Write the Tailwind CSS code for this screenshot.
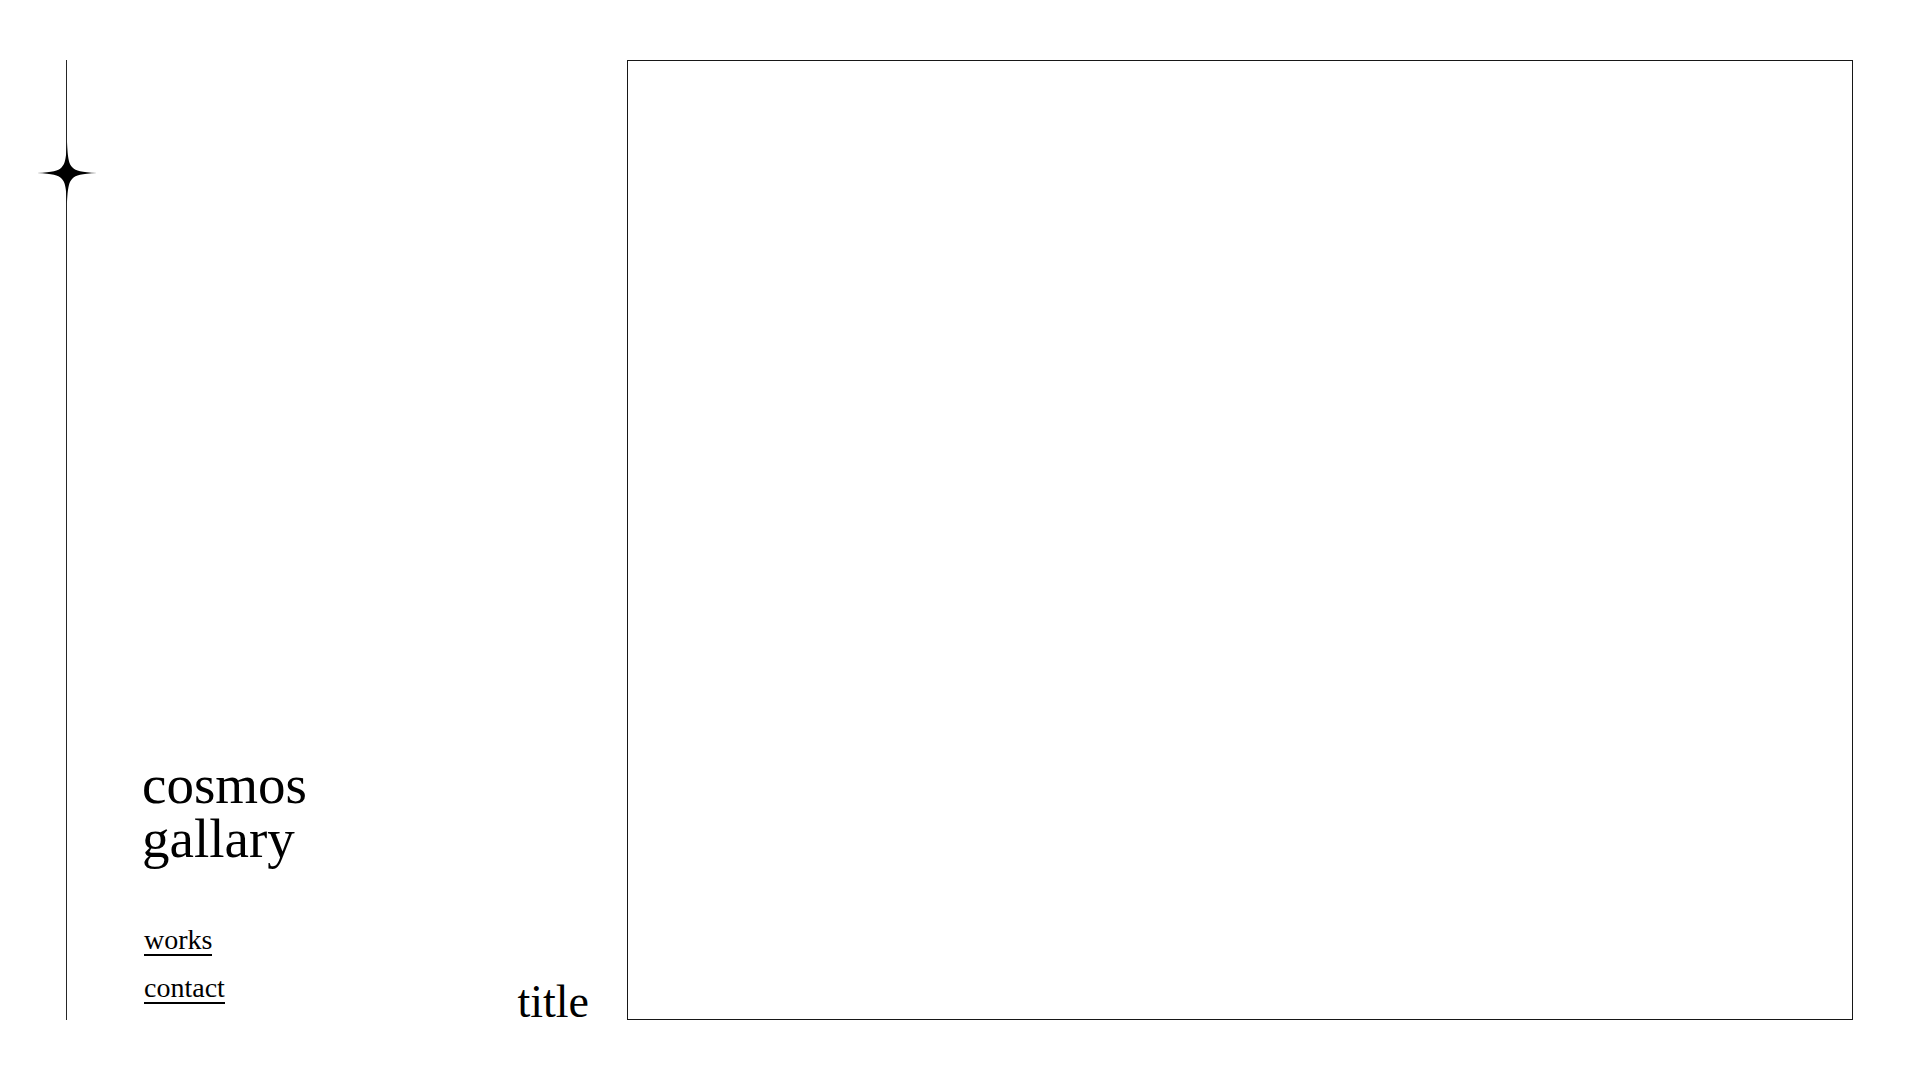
<!DOCTYPE html>
<html lang="en">
<head>
<meta charset="utf-8">
<meta name="viewport" content="width=device-width, initial-scale=1">
<title>cosmos gallary</title>
<script src="https://cdn.jsdelivr.net/npm/@tailwindcss/browser@4"></script>
</head>
<body class="bg-white text-black font-['Liberation_Serif',serif]">
<div class="flex min-h-screen py-[60px] pr-[67px] pl-[66px]">
  <div class="relative w-px shrink-0 bg-neutral-800">
    <svg class="absolute top-[82px] left-1/2 h-[62px] w-[62px] -translate-x-1/2" viewBox="-31 -31 62 62" aria-hidden="true">
      <path d="M0-31C.8-14 2-9 5.5-5.5C9-2 14-.8 30 0C14 .8 9 2 5.5 5.5C2 9 .8 14 0 31C-.8 14-2 9-5.5 5.5C-9 2-14 .8-30 0C-14-.8-9-2-5.5-5.5C-2-9-.8-14 0-31Z"/>
    </svg>
  </div>
  <header class="flex w-[560px] shrink-0 items-end justify-between pr-[38px] pl-[75px]">
    <div class="pb-4">
      <h1 class="text-[55px] leading-[54px]">
        <span class="block">cosmos</span>
        <span class="block">gallary</span>
      </h1>
      <nav class="mt-15 flex flex-col items-start gap-[18px] pl-[2px] text-[28px] leading-[28px]">
        <a href="#works" class="border-b-2 border-black">works</a>
        <a href="#contact" class="border-b-2 border-black">contact</a>
      </nav>
    </div>
    <h2 class="text-[46px] leading-[36px]">title</h2>
  </header>
  <main class="grow border border-neutral-900"></main>
</div>
</body>
</html>
